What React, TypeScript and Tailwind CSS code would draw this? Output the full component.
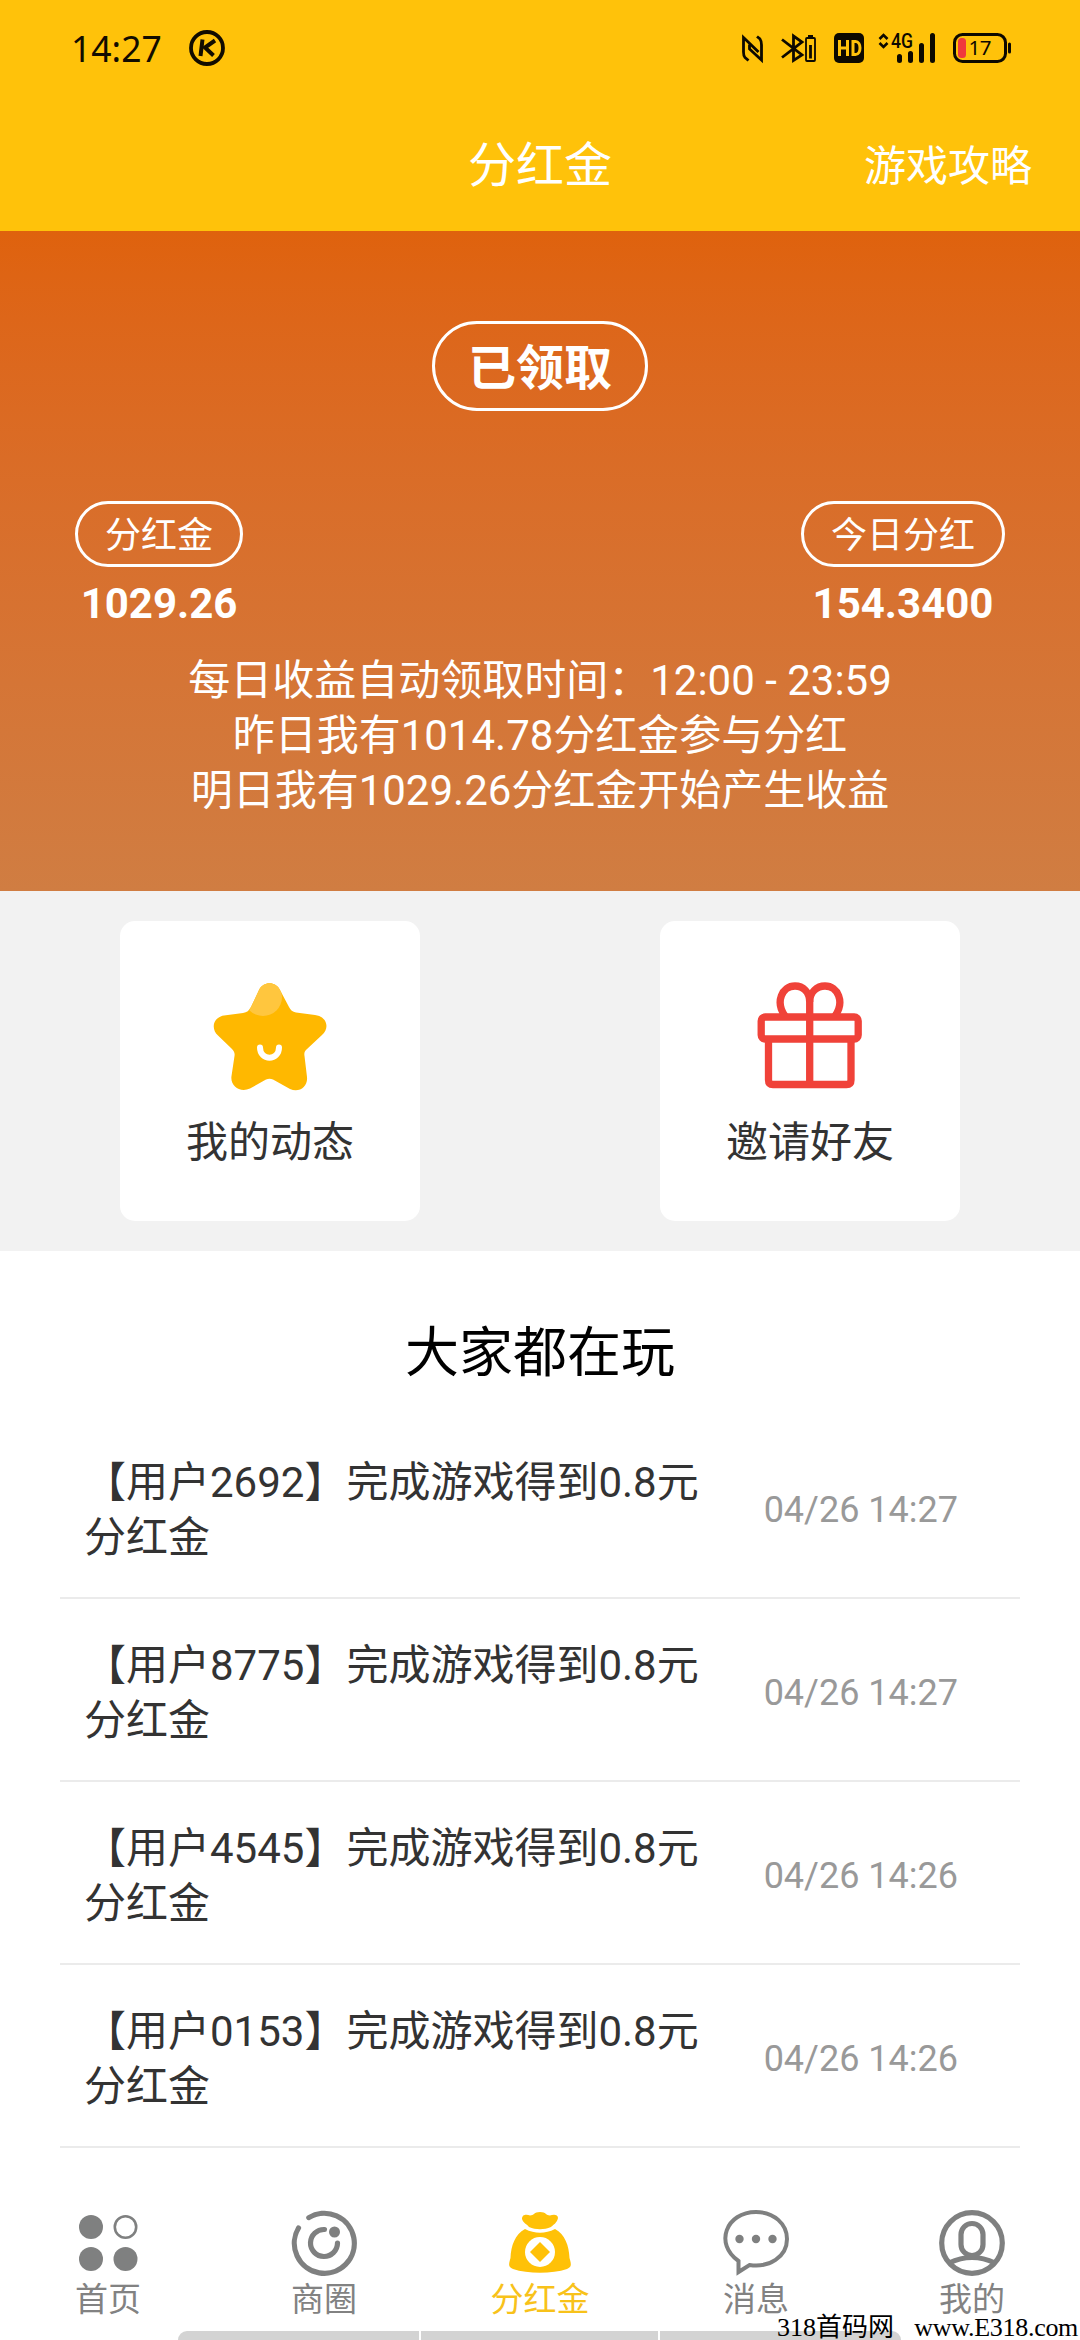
import type { ReactNode } from 'react';

const records = [
  { user: '2692', time: '04/26 14:27' },
  { user: '8775', time: '04/26 14:27' },
  { user: '4545', time: '04/26 14:26' },
  { user: '0153', time: '04/26 14:26' },
];

function KIcon() {
  return (
    <svg className="ml-[27px] h-[36px] w-[36px]" viewBox="0 0 36 36" fill="none" stroke="#120c00">
      <circle cx="18" cy="18" r="16" strokeWidth="3.8" />
      <path d="M13.5 9.5L11.5 26" strokeWidth="4" />
      <path d="M26 10.500L16 17.500L24.500 25.500" strokeWidth="4" />
    </svg>
  );
}

function StatusIcons() {
  return (
    <svg className="h-[36px] w-[276px]" viewBox="738 30 276 36" fill="none" stroke="#0d0900">
      {/* nfc */}
      <path d="M748.500 60.500L745 57.500C743.500 56 743.500 54 743.500 52V37.500L758.500 52" strokeWidth="2.800" />
      <path d="M757 36.500L760 39C761.500 41 761.500 43 761.500 45V60L749.500 49V44.500" strokeWidth="2.800" />
      {/* bluetooth + device battery */}
      <path d="M782 39.500L802 55L793.500 60.500V36L802 42L782 57.500" strokeWidth="2.800" />
      <rect x="806" y="38" width="9" height="23" rx="1" strokeWidth="1.800" />
      <path d="M808 36H813" strokeWidth="2" />
      <path d="M810.500 45V58.500" strokeWidth="2.800" />
      {/* hd */}
      <rect x="834" y="33" width="30" height="30" rx="5" fill="#0d0900" stroke="none" />
      <path d="M839.500 40V56M847.500 40V56M839.500 48H847.500" stroke="#ffc20a" strokeWidth="3" />
      <path d="M853 41.500H855.500C861.500 41.500 861.500 54.500 855.500 54.500H853Z" stroke="#ffc20a" strokeWidth="3" />
      {/* mobile data */}
      <path d="M879.500 39L883.500 35L887.500 39M879.500 43L883.500 47L887.500 43" strokeWidth="2.600" />
      <text x="891" y="48" fontSize="20" fontWeight="500" fontFamily="Roboto" textLength="22" lengthAdjust="spacingAndGlyphs" fill="#0d0900" stroke="none">4G</text>
      <path d="M899.500 56.500V60.500M910.500 53.500V60.500M921.500 45.500V60.500M932.500 35.500V60.500" strokeWidth="5" strokeLinecap="round" />
      {/* battery */}
      <rect x="954.500" y="34.500" width="51" height="27" rx="8" strokeWidth="3" />
      <rect x="958" y="38" width="8" height="20" rx="3.500" fill="#f03a3c" stroke="none" />
      <path d="M1009.500 44V52" strokeWidth="3" strokeLinecap="round" />
      <text x="968.500" y="55" fontSize="20.500" fontFamily="Noto Sans" textLength="23" fill="#0d0900" stroke="none">17</text>
    </svg>
  );
}

function StarIcon() {
  return (
    <svg className="h-[112px] w-[116px]" viewBox="0 0 116 112">
      <defs>
        <clipPath id="star">
          <path d="M47 9C51 0 64 0 68 9L77 26C78.500 29 80.500 31 84 31.500L103 34C115 35.500 118 47 110 54L95 68C92.500 70.500 92 72 92.500 75L95 96C96 106 87 112 78 108L61 98.500C58.500 97.500 56.500 97.500 54 98.500L38 107.500C28 112 18 105 19.500 95L22.500 75C23 72 22 70 19.500 67.500L6 54.500C-2 47 2 36 12 34.500L31 32C35 31.500 37 29.500 39 26Z" />
        </clipPath>
      </defs>
      <g clipPath="url(#star)">
        <path fill="#ffb800" d="M0 0H116V112H0Z" />
        <circle cx="51" cy="16" r="19" fill="#ffc63e" />
      </g>
      <path d="M48 66.500C48 80 67 80 67 66.500" fill="none" stroke="#fff" strokeWidth="6" strokeLinecap="round" />
    </svg>
  );
}

function GiftIcon() {
  return (
    <svg className="h-[112px] w-[112px]" viewBox="0 0 112 112" fill="none" stroke="#f04239" strokeWidth="7.300" strokeLinejoin="round">
      <rect x="7.200" y="36" width="97" height="22" rx="4" />
      <path d="M14.500 58V99Q14.500 103.500 19 103.500H92.500Q97 103.500 97 99V58" />
      <path d="M55.700 103.500V21C55.700 11 49 5 41 5C28 5 21 21 31 35" />
      <path d="M55.700 21C55.700 11 63 5 71 5C84 5 91 21 81 35" />
    </svg>
  );
}

function HomeIcon() {
  return (
    <svg className="h-[68px] w-[66px]" viewBox="0 0 66 68" fill="#7f8080">
      <circle cx="16" cy="17" r="12" />
      <circle cx="50.500" cy="17" r="10.700" fill="none" stroke="#7f8080" strokeWidth="2.600" />
      <circle cx="16" cy="49" r="12" />
      <circle cx="50.500" cy="49" r="12" />
    </svg>
  );
}

function CircleIcon() {
  return (
    <svg className="h-[68px] w-[66px]" viewBox="0 0 66 68" fill="none" stroke="#7f8080" strokeWidth="5.200" strokeLinecap="round">
      <path d="M17.800 7.600A30 30 0 1 1 7.500 18" />
      <path d="M33.500 19.500A13.500 13.500 0 1 0 46.500 33" />
      <circle cx="43.500" cy="22" r="5.500" fill="#7f8080" stroke="none" />
    </svg>
  );
}

function BagIcon() {
  return (
    <svg className="h-[68px] w-[66px]" viewBox="0 0 66 68">
      <path fill="#ffc107" d="M15 9C15 4 20 4.500 23 5.500C27 5.500 27 2 33 2C39 2 39 5.500 43 5.500C46 4.500 51 4 51 8C50 13 46 15 44 17C37 20 29 20 22 17C20 14 16 13 15 9Z" />
      <path fill="#ffc107" d="M18 19C28 24 38 24 48 19C58 24 62 36 62.500 48C65 56 64 57 60 59C45 64 21 64 6 59C2 57 1 56 3.500 48C4 36 8 24 18 19Z" />
      <circle cx="33" cy="42" r="15" fill="#fff" />
      <path d="M33 32L43 42L33 52L23 42Z" fill="#ffc107" />
    </svg>
  );
}

function MessageIcon() {
  return (
    <svg className="h-[68px] w-[66px]" viewBox="0 0 66 68" fill="none" stroke="#7f8080" strokeWidth="4">
      <path d="M15.500 51C-9 34 3 2 33 2C51 2 64 14 64 29C64 47 46 58 26.500 55L15.500 62Z" />
      <g fill="#7f8080" stroke="none">
        <circle cx="16.500" cy="29" r="4.200" />
        <circle cx="33" cy="29" r="4.200" />
        <circle cx="49.500" cy="29" r="4.200" />
      </g>
    </svg>
  );
}

function MineIcon() {
  return (
    <svg className="h-[68px] w-[66px]" viewBox="0 0 66 68" fill="none" stroke="#7f8080" strokeWidth="5.200">
      <circle cx="33" cy="33" r="30.300" />
      <rect x="22" y="13.500" width="22" height="32" rx="11" />
      <path d="M10 53Q33 42 56 53" />
    </svg>
  );
}

function Tab({ icon, label, active }: { icon: ReactNode; label: string; active?: boolean }) {
  return (
    <div className="flex flex-1 flex-col items-center">
      {icon}
      <span className={active ? 'text-[33px] leading-[44px] text-[#f8c21a]' : 'text-[33px] leading-[44px] text-[#828282]'}>{label}</span>
    </div>
  );
}

function ShortcutCard({ icon, label }: { icon: ReactNode; label: string }) {
  return (
    <div className="flex h-[300px] w-[300px] flex-col items-center rounded-[15px] bg-white pt-[60px]">
      {icon}
      <span className="mt-[20px] text-[42px] leading-[60px] text-[#333]">{label}</span>
    </div>
  );
}

export default function App() {
  return (
    <div className="flex h-[2340px] w-[1080px] flex-col overflow-hidden bg-white font-['Roboto','Noto_Sans_CJK_SC',sans-serif]">
      <header className="h-[231px] bg-[#ffc20a]">
        <div className="flex h-[96px] items-center justify-between pl-[71px] pr-[66px]">
          <div className="flex items-center">
            <span className="font-['Noto_Sans'] text-[35.5px] leading-[44px] text-[#120c00]">14:27</span>
            <KIcon />
          </div>
          <StatusIcons />
        </div>
        <div className="grid h-[135px] grid-cols-3 items-center px-[48px] pt-[5px] text-white">
          <span />
          <h1 className="text-center text-[48px]">分红金</h1>
          <span className="text-right text-[42px]">游戏攻略</span>
        </div>
      </header>

      <section className="flex h-[660px] flex-col items-center bg-linear-to-b from-[#df620d] to-[#d07d42] text-white">
        <div className="mt-[90px] flex h-[90px] w-[216px] items-center justify-center rounded-full border-3 border-white pt-[5px] text-[48px] font-bold">
          已领取
        </div>
        <div className="mt-[90px] flex w-full justify-between px-[75px]">
          <div className="flex flex-col items-center">
            <span className="flex h-[66px] items-center rounded-full border-3 border-white px-[27px] pt-[4px] text-[36px]">分红金</span>
            <span className="mt-[7px] text-[42px] leading-[60px] font-bold">1029.26</span>
          </div>
          <div className="flex flex-col items-center">
            <span className="flex h-[66px] items-center rounded-full border-3 border-white px-[27px] pt-[4px] text-[36px]">今日分红</span>
            <span className="mt-[7px] text-[42px] leading-[60px] font-bold">154.3400</span>
          </div>
        </div>
        <div className="mt-[19px] text-center text-[42px] leading-[55px]">
          <p>每日收益自动领取时间：12:00 - 23:59</p>
          <p>昨日我有1014.78分红金参与分红</p>
          <p>明日我有1029.26分红金开始产生收益</p>
        </div>
      </section>

      <section className="flex h-[360px] items-center justify-between bg-[#f2f2f2] px-[120px]">
        <ShortcutCard icon={<StarIcon />} label="我的动态" />
        <ShortcutCard icon={<GiftIcon />} label="邀请好友" />
      </section>

      <main className="flex-1 px-[60px] pt-[69px]">
        <h2 className="text-center text-[54px] leading-[68px] text-black">大家都在玩</h2>
        <div className="mt-[28px]">
          {records.map((record) => (
            <div key={record.user} className="flex h-[183px] items-center justify-between border-b-2 border-[#ebebeb] pt-[6px] pr-[62px] pl-[24px]">
              <p className="w-[640px] text-[42px] leading-[55px] text-[#333]">
                【用户{record.user}】完成游戏得到0.8元
                <br />
                分红金
              </p>
              <span className="text-[36px] text-[#999]">{record.time}</span>
            </div>
          ))}
        </div>
      </main>

      <nav className="relative flex h-[130px] shrink-0 bg-white">
        <Tab icon={<HomeIcon />} label="首页" />
        <Tab icon={<CircleIcon />} label="商圈" />
        <Tab icon={<BagIcon />} label="分红金" active />
        <Tab icon={<MessageIcon />} label="消息" />
        <Tab icon={<MineIcon />} label="我的" />
        <div className="absolute bottom-0 left-[178px] flex h-[9px] w-[723px] gap-[2px] overflow-hidden rounded-t-full">
          <span className="w-[241px] bg-[#d3d3d3]" />
          <span className="w-[237px] bg-[#d3d3d3]" />
          <span className="flex-1 bg-[#d3d3d3]" />
        </div>
        <div className="absolute right-[2px] bottom-0 flex h-[25px] w-[301px] items-center justify-between font-['Liberation_Serif','Noto_Sans_CJK_SC',serif] text-[26px] leading-[25px] whitespace-nowrap text-black">
          <span>318首码网</span>
          <span className="tracking-[-0.3px]">www.E318.com</span>
        </div>
      </nav>
    </div>
  );
}
